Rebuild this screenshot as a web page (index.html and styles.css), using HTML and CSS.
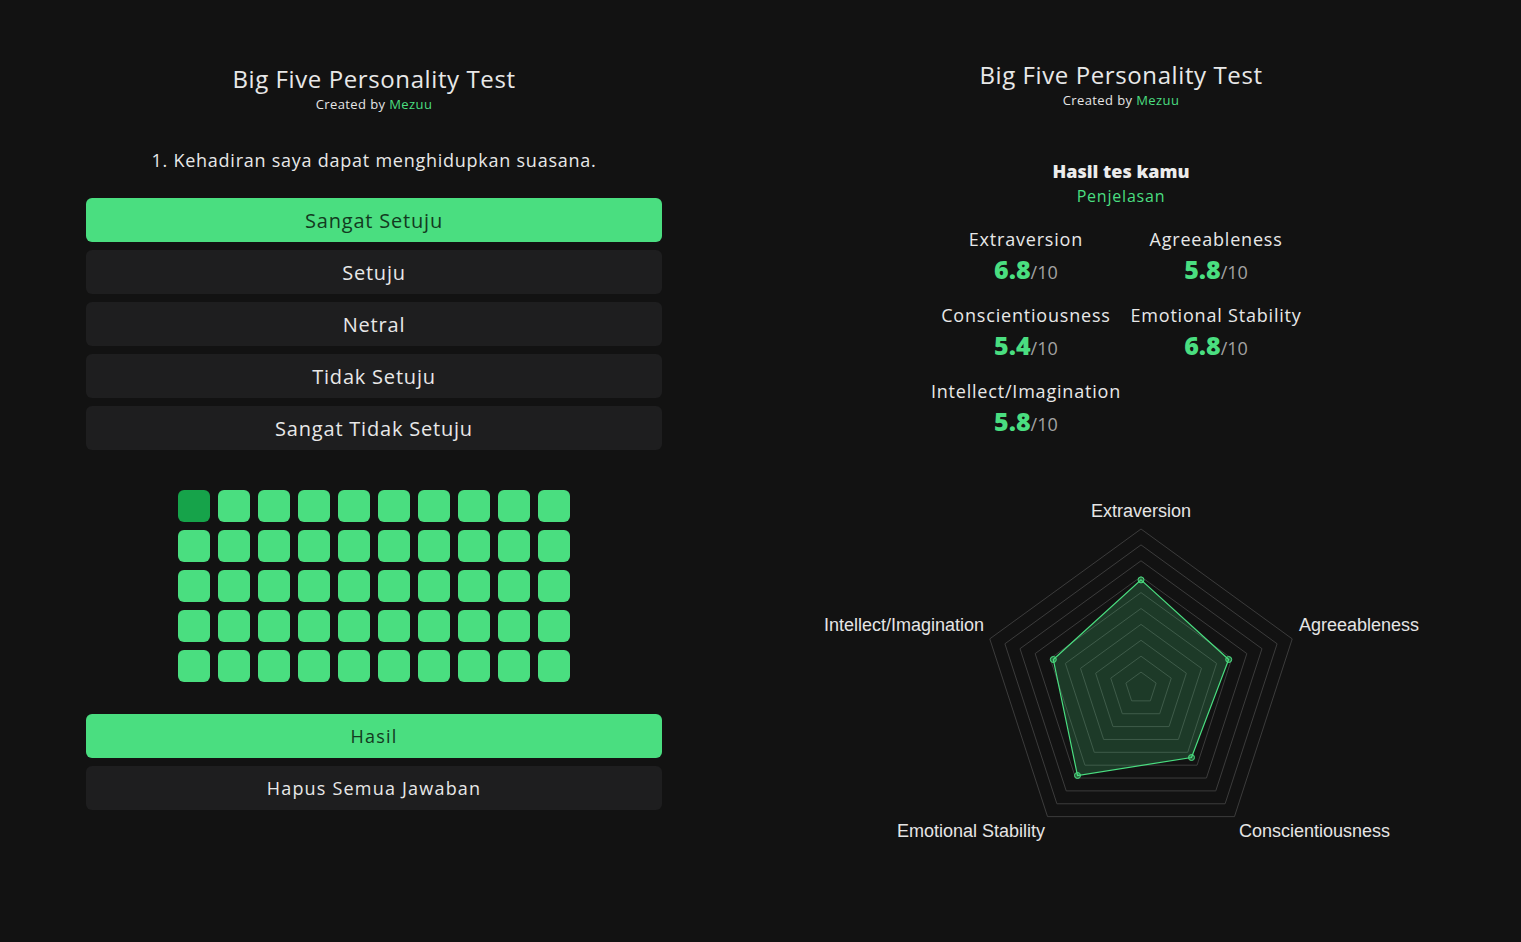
FILE: index.html
```html
<!DOCTYPE html>
<html lang="id">
<head>
<meta charset="utf-8">
<title>Big Five Personality Test</title>
<link rel="stylesheet" href="styles.css">
</head>
<body>
<main class="page">
  <section class="quiz">
    <header class="brand">
      <h1 class="brand-title">Big Five Personality Test</h1>
      <p class="brand-credit">Created by <a class="brand-link" href="#">Mezuu</a></p>
    </header>
    <p class="question">1. Kehadiran saya dapat menghidupkan suasana.</p>
    <div class="options">
      <button class="btn btn-active">Sangat Setuju</button>
      <button class="btn">Setuju</button>
      <button class="btn">Netral</button>
      <button class="btn">Tidak Setuju</button>
      <button class="btn">Sangat Tidak Setuju</button>
    </div>
    <div class="progress">
      <span class="cell cell-current"></span><span class="cell"></span><span class="cell"></span><span class="cell"></span><span class="cell"></span><span class="cell"></span><span class="cell"></span><span class="cell"></span><span class="cell"></span><span class="cell"></span>
      <span class="cell"></span><span class="cell"></span><span class="cell"></span><span class="cell"></span><span class="cell"></span><span class="cell"></span><span class="cell"></span><span class="cell"></span><span class="cell"></span><span class="cell"></span>
      <span class="cell"></span><span class="cell"></span><span class="cell"></span><span class="cell"></span><span class="cell"></span><span class="cell"></span><span class="cell"></span><span class="cell"></span><span class="cell"></span><span class="cell"></span>
      <span class="cell"></span><span class="cell"></span><span class="cell"></span><span class="cell"></span><span class="cell"></span><span class="cell"></span><span class="cell"></span><span class="cell"></span><span class="cell"></span><span class="cell"></span>
      <span class="cell"></span><span class="cell"></span><span class="cell"></span><span class="cell"></span><span class="cell"></span><span class="cell"></span><span class="cell"></span><span class="cell"></span><span class="cell"></span><span class="cell"></span>
    </div>
    <div class="actions">
      <button class="btn btn-small btn-active">Hasil</button>
      <button class="btn btn-small">Hapus Semua Jawaban</button>
    </div>
  </section>

  <section class="result">
    <header class="brand brand-result">
      <h1 class="brand-title">Big Five Personality Test</h1>
      <p class="brand-credit">Created by <a class="brand-link" href="#">Mezuu</a></p>
    </header>
    <div class="summary">
      <h2 class="summary-title">Hasil tes kamu</h2>
      <a class="summary-link" href="#">Penjelasan</a>
    </div>
    <div class="scores">
      <div class="score">
        <div class="score-label">Extraversion</div>
        <div class="score-value"><b class="score-num">6.8</b><span class="score-max">/10</span></div>
      </div>
      <div class="score">
        <div class="score-label">Agreeableness</div>
        <div class="score-value"><b class="score-num">5.8</b><span class="score-max">/10</span></div>
      </div>
      <div class="score">
        <div class="score-label">Conscientiousness</div>
        <div class="score-value"><b class="score-num">5.4</b><span class="score-max">/10</span></div>
      </div>
      <div class="score">
        <div class="score-label">Emotional Stability</div>
        <div class="score-value"><b class="score-num">6.8</b><span class="score-max">/10</span></div>
      </div>
      <div class="score">
        <div class="score-label">Intellect/Imagination</div>
        <div class="score-value"><b class="score-num">5.8</b><span class="score-max">/10</span></div>
      </div>
    </div>
    <div class="chart">
      <svg class="radar" width="620" height="360" viewBox="0 0 620 360">
        <g transform="translate(330 197)">
          <g class="ring-set">
            <polygon class="ring" transform="scale(15.9)" points="0,-1 0.9511,-0.309 0.5878,0.809 -0.5878,0.809 -0.9511,-0.309"/>
            <polygon class="ring" transform="scale(31.8)" points="0,-1 0.9511,-0.309 0.5878,0.809 -0.5878,0.809 -0.9511,-0.309"/>
            <polygon class="ring" transform="scale(47.7)" points="0,-1 0.9511,-0.309 0.5878,0.809 -0.5878,0.809 -0.9511,-0.309"/>
            <polygon class="ring" transform="scale(63.6)" points="0,-1 0.9511,-0.309 0.5878,0.809 -0.5878,0.809 -0.9511,-0.309"/>
            <polygon class="ring" transform="scale(79.5)" points="0,-1 0.9511,-0.309 0.5878,0.809 -0.5878,0.809 -0.9511,-0.309"/>
            <polygon class="ring" transform="scale(95.4)" points="0,-1 0.9511,-0.309 0.5878,0.809 -0.5878,0.809 -0.9511,-0.309"/>
            <polygon class="ring" transform="scale(111.3)" points="0,-1 0.9511,-0.309 0.5878,0.809 -0.5878,0.809 -0.9511,-0.309"/>
            <polygon class="ring" transform="scale(127.2)" points="0,-1 0.9511,-0.309 0.5878,0.809 -0.5878,0.809 -0.9511,-0.309"/>
            <polygon class="ring" transform="scale(143.1)" points="0,-1 0.9511,-0.309 0.5878,0.809 -0.5878,0.809 -0.9511,-0.309"/>
            <polygon class="ring" transform="scale(159)" points="0,-1 0.9511,-0.309 0.5878,0.809 -0.5878,0.809 -0.9511,-0.309"/>
          </g>
          <polygon class="area" points="0,-108.1 87.7,-28.5 50.5,69.5 -63.5,87.5 -87.7,-28.5"/>
          <circle class="dot" cx="0" cy="-108.1" r="3"/>
          <circle class="dot" cx="87.7" cy="-28.5" r="3"/>
          <circle class="dot" cx="50.5" cy="69.5" r="3"/>
          <circle class="dot" cx="-63.5" cy="87.5" r="3"/>
          <circle class="dot" cx="-87.7" cy="-28.5" r="3"/>
        </g>
        <text class="axis" x="330" y="20" text-anchor="middle">Extraversion</text>
        <text class="axis" x="488" y="134" text-anchor="start">Agreeableness</text>
        <text class="axis" x="428" y="340" text-anchor="start">Conscientiousness</text>
        <text class="axis" x="234" y="340" text-anchor="end">Emotional Stability</text>
        <text class="axis" x="173" y="134" text-anchor="end">Intellect/Imagination</text>
      </svg>
    </div>
  </section>
</main>
</body>
</html>
```

FILE: styles.css
```css
* {
  box-sizing: border-box;
}

html, body {
  margin: 0;
  padding: 0;
  background: #121212;
  color: #e5e5e5;
  font-family: "Open Sans", "Noto Sans", sans-serif;
}

.page {
  display: flex;
  align-items: flex-start;
  min-height: 942px;
}

.quiz {
  width: 748px;
  padding: 63px 86px 0;
  display: flex;
  flex-direction: column;
}

.result {
  width: 746px;
  padding-top: 59px;
  display: flex;
  flex-direction: column;
  align-items: center;
}

.brand {
  text-align: center;
}

.brand-title {
  margin: 0;
  font-size: 24px;
  line-height: 32px;
  font-weight: 400;
  letter-spacing: 0.6px;
  color: #e8e8e8;
}

.brand-credit {
  margin: 0;
  font-size: 13px;
  line-height: 18px;
  letter-spacing: 0.4px;
  color: #e5e5e5;
}

.brand-link {
  color: #4ade80;
  text-decoration: none;
}

.question {
  margin: 33px 0 0;
  text-align: center;
  font-size: 18px;
  line-height: 28px;
  letter-spacing: 0.75px;
  color: #e8e8e8;
}

.options {
  margin-top: 24px;
  display: flex;
  flex-direction: column;
  gap: 8px;
}

.btn {
  display: block;
  width: 100%;
  height: 44px;
  border: 0;
  border-radius: 6px;
  background: #1e1e1f;
  color: #e8e8e8;
  font-family: inherit;
  font-size: 20px;
  letter-spacing: 0.8px;
  padding: 0;
  cursor: pointer;
}

.btn-small {
  font-size: 18px;
  letter-spacing: 1.2px;
}

.btn-active {
  background: #4ade80;
  color: #133a20;
}

.progress {
  margin: 40px auto 0;
  display: grid;
  grid-template-columns: repeat(10, 32px);
  grid-auto-rows: 32px;
  gap: 8px;
}

.cell {
  border-radius: 6px;
  background: #4ade80;
}

.cell-current {
  background: #16a34a;
}

.actions {
  margin-top: 32px;
  display: flex;
  flex-direction: column;
  gap: 8px;
}

.summary {
  margin-top: 49px;
  display: flex;
  flex-direction: column;
  align-items: center;
}

.summary-title {
  margin: 0;
  font-size: 18px;
  line-height: 26px;
  font-weight: 800;
  color: #ececec;
}

.summary-link {
  font-size: 16px;
  line-height: 24px;
  letter-spacing: 0.8px;
  color: #4ade80;
  text-decoration: none;
}

.scores {
  margin-top: 18px;
  display: inline-grid;
  grid-template-columns: 1fr 1fr;
  row-gap: 16px;
  text-align: center;
}

.score-label {
  font-size: 18px;
  line-height: 26px;
  letter-spacing: 0.8px;
  color: #e8e8e8;
  white-space: nowrap;
}

.score-value {
  display: flex;
  justify-content: center;
  align-items: baseline;
  height: 34px;
  line-height: 34px;
}

.score-num {
  font-size: 25px;
  line-height: 34px;
  font-weight: 800;
  color: #4ade80;
}

.score-max {
  font-size: 18px;
  line-height: 34px;
  color: #a3a3a3;
}

.chart {
  margin-top: 53px;
}

.radar {
  display: block;
}

.ring {
  fill: none;
  stroke: #3c3c3c;
  stroke-width: 1;
  vector-effect: non-scaling-stroke;
}

.area {
  fill: rgba(74, 222, 128, 0.2);
  stroke: #4ade80;
  stroke-width: 1.2;
}

.dot {
  fill: rgba(74, 222, 128, 0.4);
  stroke: #4ade80;
  stroke-width: 1;
}

.axis {
  font-family: "Liberation Sans", Arial, sans-serif;
  font-size: 18px;
  fill: #e5e5e5;
  dominant-baseline: central;
}
```
